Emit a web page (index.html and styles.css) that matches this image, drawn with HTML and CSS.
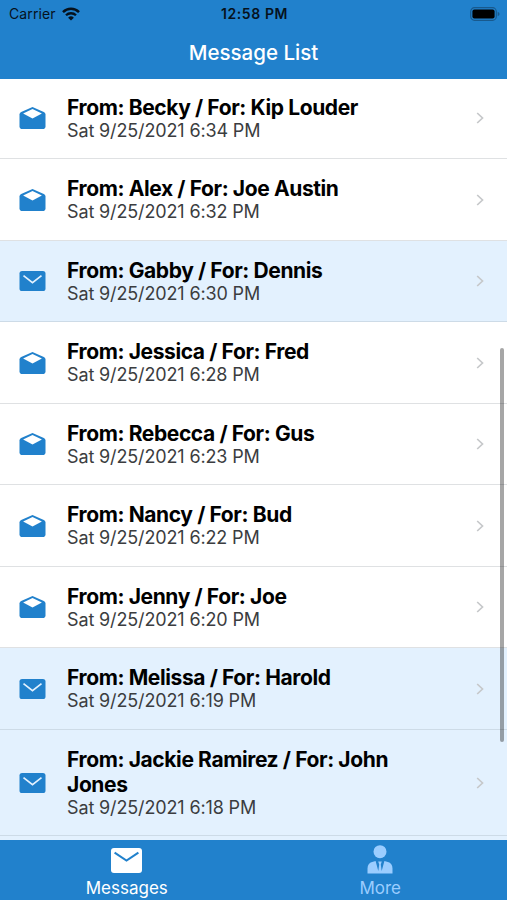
FILE: index.html
```html
<!DOCTYPE html>
<html lang="en">
<head>
    <meta charset="UTF-8">
    <meta name="viewport" content="width=device-width, initial-scale=1.0">
    <title>Message List</title>
    <link rel="stylesheet" href="styles.css">
</head>
<body>
    <!-- Shared icons -->
    <svg class="sprite" width="0" height="0">
        <symbol id="icon-open" viewBox="0 0 26 22">
            <path d="M13 0 L24.3 5.1 Q26 6 26 7.6 V19.2 Q26 22 23.2 22 H2.8 Q0 22 0 19.2 V7.6 Q0 6 1.7 5.1 Z" fill="#2181cc"/>
            <path class="flap" d="M13 1.9 L22.4 6.6 L13 11.4 L3.6 6.6 Z" fill="#fff"/>
        </symbol>
        <symbol id="icon-closed" viewBox="0 0 26 20">
            <rect width="26" height="20" rx="2.6" fill="#2181cc"/>
            <path d="M4 4.6 L13 11.6 L22 4.6" fill="none" stroke="#e3f1fe" stroke-width="1.7"/>
        </symbol>
        <symbol id="icon-chevron" viewBox="0 0 8 12">
            <path d="M1.2 1 L6.5 6 L1.2 11" fill="none" stroke="currentColor" stroke-width="1.7"/>
        </symbol>
    </svg>

    <div class="app">
        <header class="header">
            <div class="status-bar">
                <div class="carrier">
                    <span>Carrier</span>
                    <svg width="18" height="14" viewBox="0 0 18 14">
                        <path d="M1 5.1 A11.4 11.4 0 0 1 17 5.1" fill="none" stroke="#06121d" stroke-width="2.5"/>
                        <path d="M4 8.3 A7.1 7.1 0 0 1 14 8.3" fill="none" stroke="#06121d" stroke-width="2.3"/>
                        <path d="M9 13.6 L6.1 10.7 A4.2 4.2 0 0 1 11.9 10.7 Z" fill="#06121d"/>
                    </svg>
                </div>
                <div class="time">12:58 PM</div>
                <div class="battery">
                    <svg width="30" height="14" viewBox="0 0 30 14">
                        <rect x="0.7" y="0.7" width="25.6" height="12.6" rx="3.8" fill="none" stroke="#18598d" stroke-width="1.2"/>
                        <rect x="2.4" y="2.4" width="22.2" height="9.2" rx="2" fill="#000"/>
                        <path d="M27.7 4.8 Q29.6 5.5 29.6 7 Q29.6 8.5 27.7 9.2 Z" fill="#18598d"/>
                    </svg>
                </div>
            </div>
            <h1 class="title">Message List</h1>
        </header>

        <main class="list">
            <div class="row">
                <svg class="mail open"><use href="#icon-open"/></svg>
                <div class="text">
                    <div class="from">From: Becky / For: Kip Louder</div>
                    <div class="date">Sat 9/25/2021 6:34 PM</div>
                </div>
                <svg class="chevron"><use href="#icon-chevron"/></svg>
            </div>
            <div class="row">
                <svg class="mail open"><use href="#icon-open"/></svg>
                <div class="text">
                    <div class="from">From: Alex / For: Joe Austin</div>
                    <div class="date">Sat 9/25/2021 6:32 PM</div>
                </div>
                <svg class="chevron"><use href="#icon-chevron"/></svg>
            </div>
            <div class="row unread">
                <svg class="mail"><use href="#icon-closed"/></svg>
                <div class="text">
                    <div class="from">From: Gabby / For: Dennis</div>
                    <div class="date">Sat 9/25/2021 6:30 PM</div>
                </div>
                <svg class="chevron"><use href="#icon-chevron"/></svg>
            </div>
            <div class="row">
                <svg class="mail open"><use href="#icon-open"/></svg>
                <div class="text">
                    <div class="from">From: Jessica / For: Fred</div>
                    <div class="date">Sat 9/25/2021 6:28 PM</div>
                </div>
                <svg class="chevron"><use href="#icon-chevron"/></svg>
            </div>
            <div class="row">
                <svg class="mail open"><use href="#icon-open"/></svg>
                <div class="text">
                    <div class="from">From: Rebecca / For: Gus</div>
                    <div class="date">Sat 9/25/2021 6:23 PM</div>
                </div>
                <svg class="chevron"><use href="#icon-chevron"/></svg>
            </div>
            <div class="row">
                <svg class="mail open"><use href="#icon-open"/></svg>
                <div class="text">
                    <div class="from">From: Nancy / For: Bud</div>
                    <div class="date">Sat 9/25/2021 6:22 PM</div>
                </div>
                <svg class="chevron"><use href="#icon-chevron"/></svg>
            </div>
            <div class="row">
                <svg class="mail open"><use href="#icon-open"/></svg>
                <div class="text">
                    <div class="from">From: Jenny / For: Joe</div>
                    <div class="date">Sat 9/25/2021 6:20 PM</div>
                </div>
                <svg class="chevron"><use href="#icon-chevron"/></svg>
            </div>
            <div class="row unread">
                <svg class="mail"><use href="#icon-closed"/></svg>
                <div class="text">
                    <div class="from">From: Melissa / For: Harold</div>
                    <div class="date">Sat 9/25/2021 6:19 PM</div>
                </div>
                <svg class="chevron"><use href="#icon-chevron"/></svg>
            </div>
            <div class="row unread">
                <svg class="mail"><use href="#icon-closed"/></svg>
                <div class="text">
                    <div class="from">From: Jackie Ramirez / For: John Jones</div>
                    <div class="date">Sat 9/25/2021 6:18 PM</div>
                </div>
                <svg class="chevron"><use href="#icon-chevron"/></svg>
            </div>
            <div class="scrollbar"></div>
        </main>

        <nav class="tabs">
            <div class="tab active">
                <svg width="31" height="25" viewBox="0 0 31 25">
                    <rect width="31" height="25" rx="3" fill="#fff"/>
                    <path d="M3.6 4.6 L15.5 12.6 L27.4 4.6" fill="none" stroke="#2181cc" stroke-width="2"/>
                </svg>
                <span>Messages</span>
            </div>
            <div class="tab">
                <svg width="26" height="29" viewBox="0 0 26 29">
                    <circle cx="13" cy="6.7" r="6.5" fill="#9bcdff"/>
                    <path d="M0.5 28.5 V23.5 Q0.5 18 6 16.8 L8.6 16 L11.3 26 L12.2 19.4 L11.2 16.4 H14.8 L13.8 19.4 L14.7 26 L17.4 16 L20 16.8 Q25.5 18 25.5 23.5 V28.5 Z" fill="#9bcdff"/>
                </svg>
                <span>More</span>
            </div>
        </nav>
    </div>
</body>
</html>
```
FILE: styles.css
```css
* {
    box-sizing: border-box;
}
body {
    margin: 0;
    font-family: Inter, "Liberation Sans", sans-serif;
    background: #fff;
}
.sprite {
    display: block;
}
.app {
    display: flex;
    flex-direction: column;
    height: 900px;
    overflow: hidden;
}
.header {
    flex: none;
    height: 79px;
    background: #2181cc;
}
.status-bar {
    display: grid;
    grid-template-columns: 1fr auto 1fr;
    align-items: center;
    height: 27px;
    padding: 0 7px 0 9px;
    color: #06121d;
    font-size: 14px;
}
.carrier {
    display: flex;
    align-items: center;
    gap: 6px;
    letter-spacing: 0.1px;
}
.time {
    font-weight: 600;
    font-size: 14px;
    letter-spacing: 0.6px;
}
.battery {
    display: flex;
    justify-content: flex-end;
}
.title {
    margin: 0;
    color: #fff;
    font-size: 20.5px;
    font-weight: 500;
    line-height: 51px;
    text-align: center;
}
.list {
    position: relative;
    flex: 1;
    overflow: hidden;
    background: #e3f1fe;
}
.row {
    display: flex;
    align-items: center;
    min-height: 81.5px;
    padding: 17px 22px 16.5px 19px;
    border-bottom: 1px solid #dfe1e3;
    background: #fff;
}
.row:first-child {
    min-height: 79.7px;
    padding-top: 15.5px;
}
.row.unread {
    background: #e3f1fe;
    border-color: #cddbe7;
}
.mail {
    flex: none;
    width: 27px;
    height: 20px;
}
.mail.open {
    height: 22px;
}
.text {
    flex: 1;
    margin: 0 65px 0 21px;
}
.from {
    color: #000;
    font-size: 21px;
    font-weight: 700;
    line-height: 25px;
    letter-spacing: -0.39px;
}
.date {
    color: #3b3d40;
    font-size: 18px;
    line-height: 22px;
    letter-spacing: -0.14px;
}
.chevron {
    flex: none;
    width: 8px;
    height: 12px;
    margin-right: 1px;
    color: #c6c8ca;
}
.scrollbar {
    position: absolute;
    top: 269px;
    right: 3px;
    width: 4px;
    height: 394px;
    border-radius: 2px;
    background: rgba(0, 0, 0, 0.35);
}
.tabs {
    display: flex;
    flex: none;
    height: 60px;
    background: #2181cc;
}
.tab {
    display: flex;
    flex: 1;
    flex-direction: column;
    align-items: center;
    justify-content: flex-end;
    gap: 3px;
    color: #9bcdff;
    font-size: 17px;
    line-height: 24px;
}
.tab:last-child {
    gap: 2px;
}
.tab.active {
    color: #fff;
}
```
